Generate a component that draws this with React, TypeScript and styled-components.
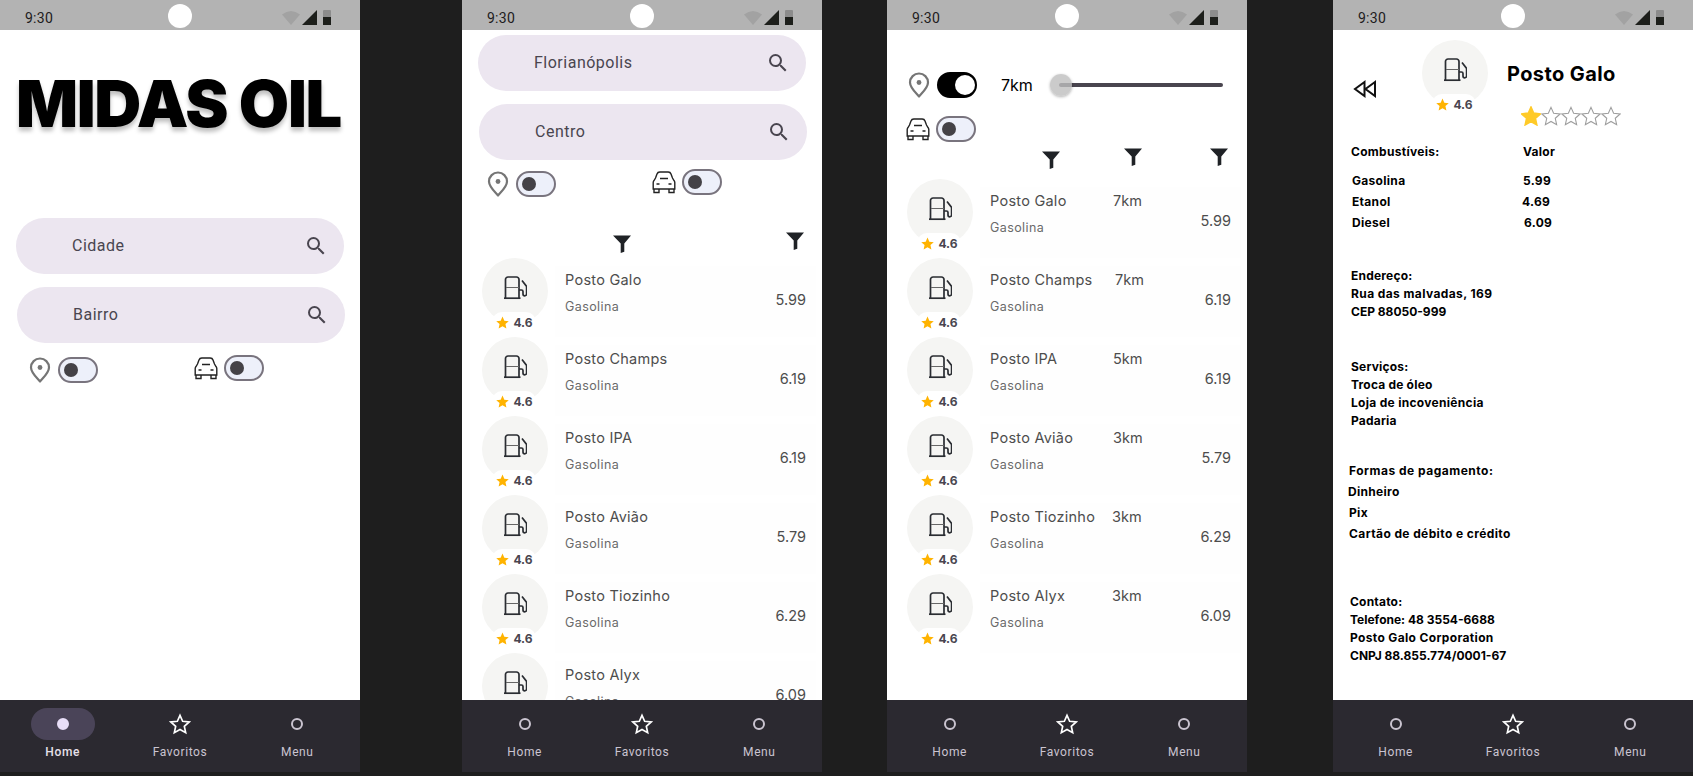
import React from "react";
import styled, { createGlobalStyle } from "styled-components";
import { MdSearch } from "react-icons/md";

const stations = [
  { name: "Posto Galo", price: "5.99", km: "7km", kmX: 0 },
  { name: "Posto Champs", price: "6.19", km: "7km", kmX: 2 },
  { name: "Posto IPA", price: "6.19", km: "5km", kmX: 0 },
  { name: "Posto Avião", price: "5.79", km: "3km", kmX: 0 },
  { name: "Posto Tiozinho", price: "6.29", km: "3km", kmX: -1 },
  { name: "Posto Alyx", price: "6.09", km: "3km", kmX: -1 },
];

const StarIcon = ({
  size,
  fill,
  stroke,
  weight = 2,
  tight,
}: {
  size: number;
  fill: string;
  stroke?: string;
  weight?: number;
  tight?: boolean;
}) => (
  <svg width={size} height={size} viewBox={tight ? "1 1.500 22 21" : "0 0 24 24"}>
    <polygon
      points="12,2.500 14.900,9 22,9.800 16.700,14.500 18.200,21.500 12,18 5.800,21.500 7.300,14.500 2,9.800 9.100,9"
      fill={fill}
      stroke={stroke || "none"}
      strokeWidth={stroke ? weight : 0}
    />
  </svg>
);

const PumpIcon = () => (
  <svg width="24" height="24" viewBox="0 0 24 24" fill="none" stroke="#2a2d32" strokeWidth="1.700">
    <path d="M2.500 22V3.500a2.500 2.500 0 0 1 2.500-2.500h8.500a2.500 2.500 0 0 1 2.500 2.500V22" />
    <path d="M1 22.200h16.500" />
    <path d="M3 11.500h13" strokeWidth="1" stroke="#666" />
    <path d="M16 14h2.500a1.500 1.500 0 0 1 1.500 1.500V18a1.800 1.800 0 0 0 3.600 0V10.500L19 4.500" />
  </svg>
);

const FilterIcon = () => (
  <svg width="18" height="18" viewBox="0 0 18 18">
    <path d="M0 .5h18L11.300 8.500v8.300l-3.600 1.200V8.500z" fill="#1f2226" />
  </svg>
);

const PinIcon = () => (
  <svg width="22" height="26" viewBox="0 0 22 26" fill="none">
    <path
      d="M11 24.500C6.500 19.500 2 15.500 2 10.500a9 9 0 0 1 18 0c0 5-4.500 9-9 14z"
      stroke="#757575"
      strokeWidth="2.200"
      strokeLinejoin="round"
    />
    <circle cx="11" cy="10.500" r="2.400" fill="#757575" />
  </svg>
);

const CarIcon = () => (
  <svg width="24" height="23" viewBox="0 0 24 23" fill="none" stroke="#222" strokeWidth="1.400">
    <path d="M3.500 7 5 3a3 3 0 0 1 3-2h8a3 3 0 0 1 3 2l1.500 4 1.500 2.500a3 3 0 0 1 .800 2V18H1.200v-6.500a3 3 0 0 1 .800-2z" />
    <path d="M2 18v3.500h5V18M17 18v3.500h5V18" />
    <path d="M8 7.500h8M4.500 13h3M16.500 13h3" />
  </svg>
);

const BackIcon = () => (
  <svg width="24" height="18" viewBox="0 0 24 18" fill="none" stroke="#111" strokeWidth="2">
    <path d="M11.500 2 2 9l9.500 7zM22 2l-9.500 7 9.500 7z" />
  </svg>
);

function StatusBar() {
  return (
    <Status>
      <Time>9:30</Time>
      <Camera />
      <StatusIcons>
        <svg width="18" height="15" viewBox="0 0 18 15">
          <path d="M0 4.500Q9-2.500 18 4.500L9 15z" fill="#a2a2a2" />
        </svg>
        <svg width="15" height="15" viewBox="0 0 15 15">
          <path d="M0 15 15 0v15z" fill="#1d1f1b" />
        </svg>
        <Battery />
      </StatusIcons>
    </Status>
  );
}

function NavBar({ active }: { active?: boolean }) {
  return (
    <Nav>
      <NavItem>
        <NavIcon $active={active}>
          <NavDot $active={active} />
        </NavIcon>
        <NavLabel $active={active}>Home</NavLabel>
      </NavItem>
      <NavItem>
        <NavIcon>
          <StarIcon size={22} fill="none" stroke="#ffffff" weight={1.800} />
        </NavIcon>
        <NavLabel>Favoritos</NavLabel>
      </NavItem>
      <NavItem>
        <NavIcon>
          <NavDot />
        </NavIcon>
        <NavLabel>Menu</NavLabel>
      </NavItem>
    </Nav>
  );
}

function Search({ label, top, left }: { label: string; top: number; left: number }) {
  return (
    <SearchBar $top={top} $left={left}>
      <SearchText>{label}</SearchText>
      <MdSearch size={24} color="#49454f" />
    </SearchBar>
  );
}

function Avatar() {
  return (
    <AvatarCircle>
      <PumpIcon />
      <RatingBadge>
        <StarIcon size={15} fill="#ffb300" />
        4.6
      </RatingBadge>
    </AvatarCircle>
  );
}

function StationList({ showKm }: { showKm?: boolean }) {
  return (
    <>
      {stations.map((s) => (
        <StationRow key={s.name}>
          <Avatar />
          <StationBody>
            <StationInfo>
              <NameLine>
                <StationName>{s.name}</StationName>
                {showKm && <Distance $shift={s.kmX}>{s.km}</Distance>}
              </NameLine>
              <FuelName>Gasolina</FuelName>
            </StationInfo>
            <Price>{s.price}</Price>
          </StationBody>
        </StationRow>
      ))}
    </>
  );
}

function ToggleRow({ top, left }: { top: number; left: number }) {
  return (
    <Toggles $top={top} $left={left}>
      <ToggleGroup $width={165} $top={2} $gap={7}>
        <PinIcon />
        <Switch />
      </ToggleGroup>
      <ToggleGroup $gap={6}>
        <CarIcon />
        <Switch />
      </ToggleGroup>
    </Toggles>
  );
}

function HomeScreen() {
  return (
    <Phone>
      <StatusBar />
      <Content>
        <Title>MIDAS OIL</Title>
        <Search label="Cidade" top={65} left={16} />
        <Search label="Bairro" top={13} left={17} />
        <ToggleRow top={12} left={29} />
      </Content>
      <NavBar active />
    </Phone>
  );
}

function ListScreen() {
  return (
    <Phone $left={102}>
      <StatusBar />
      <Content>
        <Search label="Florianópolis" top={5} left={16} />
        <Search label="Centro" top={13} left={17} />
        <ToggleRow top={9} left={25} />
        <FilterRow $top={35} $height={26}>
          <FilterSlot $left={151} $top={3}>
            <FilterIcon />
          </FilterSlot>
          <FilterSlot $left={155}>
            <FilterIcon />
          </FilterSlot>
        </FilterRow>
        <StationList />
      </Content>
      <NavBar />
    </Phone>
  );
}

function DistanceScreen() {
  return (
    <Phone $left={65}>
      <StatusBar />
      <Content>
        <SliderRow>
          <PinIcon />
          <Switch $on />
          <SliderValue>7km</SliderValue>
          <SliderTrack>
            <SliderThumb />
          </SliderTrack>
        </SliderRow>
        <CarRow>
          <CarIcon />
          <Switch />
        </CarRow>
        <FilterRow $top={6} $height={31}>
          <FilterSlot $left={155} $top={3}>
            <FilterIcon />
          </FilterSlot>
          <FilterSlot $left={64}>
            <FilterIcon />
          </FilterSlot>
          <FilterSlot $left={68}>
            <FilterIcon />
          </FilterSlot>
        </FilterRow>
        <StationList showKm />
      </Content>
      <NavBar />
    </Phone>
  );
}

function DetailScreen() {
  return (
    <Phone $left={86}>
      <StatusBar />
      <Content>
        <DetailHeader>
          <BackSlot>
            <BackIcon />
          </BackSlot>
          <Avatar />
          <HeaderText>
            <DetailTitle>Posto Galo</DetailTitle>
            <Stars>
              <StarIcon tight size={20} fill="#ffca28" stroke="#ffca28" />
              <StarIcon tight size={20} fill="none" stroke="#9e9e9e" weight={1.200} />
              <StarIcon tight size={20} fill="none" stroke="#9e9e9e" weight={1.200} />
              <StarIcon tight size={20} fill="none" stroke="#9e9e9e" weight={1.200} />
              <StarIcon tight size={20} fill="none" stroke="#9e9e9e" weight={1.200} />
            </Stars>
          </HeaderText>
        </DetailHeader>

        <FuelHead>
          <span>Combustíveis:</span>
          <span>Valor</span>
        </FuelHead>
        <FuelRow $value={171}>
          <span>Gasolina</span>
          <span>5.99</span>
        </FuelRow>
        <FuelRow $value={170}>
          <span>Etanol</span>
          <span>4.69</span>
        </FuelRow>
        <FuelRow $value={172}>
          <span>Diesel</span>
          <span>6.09</span>
        </FuelRow>

        <InfoBlock $top={34} $left={18}>
          <InfoLine $sp={0.2}>Endereço:</InfoLine>
          <InfoLine $sp={0.4}>Rua das malvadas, 169</InfoLine>
          <InfoLine>CEP 88050-999</InfoLine>
        </InfoBlock>
        <InfoBlock $top={37} $left={18}>
          <InfoLine $sp={0.2}>Serviços:</InfoLine>
          <InfoLine $sp={0.2}>Troca de óleo</InfoLine>
          <InfoLine $sp={0.3}>Loja de incoveniência</InfoLine>
          <InfoLine $sp={0.2}>Padaria</InfoLine>
        </InfoBlock>
        <InfoBlock $top={30} $left={16} $line={21}>
          <InfoLine $sp={0.5}>Formas de pagamento:</InfoLine>
          <InfoLine $sp={0.3} $shift={-1}>
            Dinheiro
          </InfoLine>
          <InfoLine $sp={0.3}>Pix</InfoLine>
          <InfoLine $sp={0.4}>Cartão de débito e crédito</InfoLine>
        </InfoBlock>
        <InfoBlock $top={49} $left={17}>
          <InfoLine $sp={0.2}>Contato:</InfoLine>
          <InfoLine>Telefone: 48 3554-6688</InfoLine>
          <InfoLine $sp={0.35}>Posto Galo Corporation</InfoLine>
          <InfoLine>CNPJ 88.855.774/0001-67</InfoLine>
        </InfoBlock>
      </Content>
      <NavBar />
    </Phone>
  );
}

export default function App() {
  return (
    <>
      <GlobalStyle />
      <Stage>
        <HomeScreen />
        <ListScreen />
        <DistanceScreen />
        <DetailScreen />
      </Stage>
    </>
  );
}

const GlobalStyle = createGlobalStyle`
  html, body {
    margin: 0;
    background-color: #1e1e1e;
    overflow: hidden;
  }
`;

const Stage = styled.div`
  display: flex;
  width: 1693px;
  height: 776px;
  font-family: Inter, "Liberation Sans", sans-serif;
`;

const Phone = styled.div<{ $left?: number }>`
  width: 360px;
  height: 772px;
  flex-shrink: 0;
  margin-left: ${({ $left }) => $left || 0}px;
  display: flex;
  flex-direction: column;
  background-color: #fff;
`;

const Content = styled.div`
  flex: 1;
  min-height: 0;
  overflow: hidden;
`;

// status bar
const Status = styled.div`
  position: relative;
  height: 30px;
  flex-shrink: 0;
  background-color: #b3b3b3;
  display: flex;
  align-items: center;
  justify-content: space-between;
  padding: 0 29px 0 25px;
`;

const Time = styled.span`
  font-family: Roboto, sans-serif;
  font-size: 14px;
  font-weight: 400;
  letter-spacing: 0.25px;
  color: #1d1b20;
  padding-top: 6px;
`;

const Camera = styled.div`
  position: absolute;
  left: 168px;
  top: 4px;
  width: 24px;
  height: 24px;
  border-radius: 50%;
  background-color: #fff;
`;

const StatusIcons = styled.div`
  display: flex;
  align-items: flex-end;
  gap: 2px;
  padding-top: 5px;
`;

const Battery = styled.div`
  width: 8px;
  height: 15px;
  margin-left: 4px;
  border-radius: 1px 1px 0 0;
  background: linear-gradient(#8c8c8c 0 50%, #1d1f1b 50% 100%);
`;

// bottom nav
const Nav = styled.div`
  height: 72px;
  flex-shrink: 0;
  background-color: #2b2930;
  display: grid;
  grid-template-columns: repeat(3, 1fr);
  padding: 0 4px;
`;

const NavItem = styled.div`
  display: flex;
  flex-direction: column;
  align-items: center;
  padding-top: 8px;
`;

const NavIcon = styled.div<{ $active?: boolean }>`
  width: 64px;
  height: 32px;
  border-radius: 16px;
  display: flex;
  align-items: center;
  justify-content: center;
  background-color: ${({ $active }) => ($active ? "#4a4458" : "transparent")};
`;

const NavDot = styled.div<{ $active?: boolean }>`
  width: 12px;
  height: 12px;
  border-radius: 50%;
  box-sizing: border-box;
  border: 2px solid ${({ $active }) => ($active ? "#e8def8" : "#cac4d0")};
  background-color: ${({ $active }) => ($active ? "#e8def8" : "transparent")};
`;

const NavLabel = styled.span<{ $active?: boolean }>`
  margin-top: 4px;
  font-family: Roboto, sans-serif;
  font-size: 12px;
  line-height: 16px;
  font-weight: ${({ $active }) => ($active ? 500 : 400)};
  letter-spacing: 0.6px;
  color: ${({ $active }) => ($active ? "#e6e0e9" : "#cac4d0")};
`;

// home
const Title = styled.h1`
  margin: 28px 0 0 0;
  padding-left: 16px;
  height: 95px;
  line-height: 91px;
  font-size: 65px;
  font-weight: 900;
  letter-spacing: -1.350px;
  white-space: nowrap;
  color: #000;
  text-shadow: 0 4px 4px rgba(0, 0, 0, 0.25);
`;

const SearchBar = styled.div<{ $top: number; $left: number }>`
  width: 328px;
  height: 56px;
  box-sizing: border-box;
  margin: ${({ $top, $left }) => `${$top}px 0 0 ${$left}px`};
  padding: 0 16px 0 56px;
  border-radius: 28px;
  background-color: #ece6f0;
  display: flex;
  align-items: center;
  justify-content: space-between;
`;

const SearchText = styled.span`
  font-family: Roboto, sans-serif;
  font-size: 16px;
  letter-spacing: 0.5px;
  color: #49454f;
  padding-bottom: 1px;
`;

const Toggles = styled.div<{ $top: number; $left: number }>`
  display: flex;
  align-items: flex-start;
  margin: ${({ $top, $left }) => `${$top}px 0 0 ${$left}px`};
`;

const ToggleGroup = styled.div<{ $width?: number; $top?: number; $gap: number }>`
  display: flex;
  align-items: center;
  gap: ${({ $gap }) => $gap}px;
  width: ${({ $width }) => ($width ? `${$width}px` : "auto")};
  margin-top: ${({ $top }) => $top || 0}px;
`;

const Switch = styled.div<{ $on?: boolean }>`
  position: relative;
  width: 40px;
  height: 26px;
  box-sizing: border-box;
  flex-shrink: 0;
  border-radius: 13px;
  border: 2px solid ${({ $on }) => ($on ? "#000" : "#79747e")};
  background-color: ${({ $on }) => ($on ? "#000" : "#edf0fa")};

  &::after {
    content: "";
    position: absolute;
    border-radius: 50%;
    top: ${({ $on }) => ($on ? "1px" : "4px")};
    left: ${({ $on }) => ($on ? "16px" : "4px")};
    width: ${({ $on }) => ($on ? "20px" : "14px")};
    height: ${({ $on }) => ($on ? "20px" : "14px")};
    background-color: ${({ $on }) => ($on ? "#fff" : "#444247")};
  }
`;

// filters and list
const FilterRow = styled.div<{ $top: number; $height: number }>`
  display: flex;
  align-items: flex-start;
  margin-top: ${({ $top }) => $top}px;
  height: ${({ $height }) => $height}px;
`;

const FilterSlot = styled.div<{ $left: number; $top?: number }>`
  display: flex;
  margin-left: ${({ $left }) => $left}px;
  margin-top: ${({ $top }) => $top || 0}px;
`;

const StationRow = styled.div`
  height: 79px;
  display: flex;
  align-items: flex-start;
  padding-left: 20px;
`;

const AvatarCircle = styled.div`
  position: relative;
  width: 66px;
  height: 66px;
  flex-shrink: 0;
  box-sizing: border-box;
  padding-top: 18px;
  border-radius: 50%;
  background-color: #f5f5f3;
  display: flex;
  justify-content: center;
  align-items: flex-start;
`;

const RatingBadge = styled.div`
  position: absolute;
  left: 10px;
  top: 54px;
  width: 44px;
  height: 18px;
  box-sizing: border-box;
  padding-top: 2px;
  border-radius: 10px 10px 0 0;
  background-color: #fff;
  display: flex;
  align-items: center;
  justify-content: center;
  gap: 3px;
  font-size: 12px;
  font-weight: 700;
  color: #49454f;
`;

const StationBody = styled.div`
  flex: 1;
  height: 71px;
  margin: 8px 6px 0 7px;
  box-sizing: border-box;
  padding: 0 10px;
  background-color: #fefefe;
  display: flex;
  justify-content: space-between;
  align-items: flex-start;
`;

const StationInfo = styled.div`
  display: flex;
  flex-direction: column;
`;

const NameLine = styled.div`
  display: flex;
  margin-top: 4px;
  height: 20px;
  line-height: 20px;
`;

const StationName = styled.span`
  width: 123px;
  font-size: 14.500px;
  letter-spacing: 0.250px;
  color: #4d4d4d;
  white-space: nowrap;
`;

const Distance = styled.span<{ $shift: number }>`
  margin-left: ${({ $shift }) => $shift}px;
  font-size: 14.500px;
  color: #4d4d4d;
`;

const FuelName = styled.span`
  margin-top: 9px;
  line-height: 16px;
  font-size: 12.500px;
  letter-spacing: 0.400px;
  color: #6a6a6a;
`;

const Price = styled.span`
  margin-top: 24px;
  line-height: 20px;
  font-size: 14.500px;
  color: #4d4d4d;
`;

// distance filter
const SliderRow = styled.div`
  display: flex;
  align-items: center;
  margin-top: 42px;
  padding-left: 21px;
  gap: 7px;
`;

const SliderValue = styled.span`
  margin-left: 17px;
  width: 50px;
  font-size: 16px;
  color: #000;
`;

const SliderTrack = styled.div`
  position: relative;
  width: 164px;
  height: 4px;
  margin-left: 1px;
  border-radius: 2px;
  background-color: #49454f;
`;

const SliderThumb = styled.div`
  position: absolute;
  left: -9px;
  top: -9px;
  width: 22px;
  height: 22px;
  border-radius: 50%;
  background-color: rgba(190, 190, 190, 0.8);
  box-shadow: 0 1px 3px rgba(0, 0, 0, 0.3);
`;

const CarRow = styled.div`
  display: flex;
  align-items: center;
  margin-top: 18px;
  padding-left: 19px;
  gap: 6px;
`;

// detail
const DetailHeader = styled.div`
  display: flex;
  align-items: flex-start;
  height: 113px;
  padding: 10px 0 0 20px;
  box-sizing: border-box;
`;

const BackSlot = styled.div`
  display: flex;
  width: 69px;
  margin-top: 40px;
`;

const HeaderText = styled.div`
  margin: 19px 0 0 19px;
`;

const DetailTitle = styled.div`
  line-height: 30px;
  font-size: 20px;
  font-weight: 700;
  letter-spacing: 0.400px;
  color: #000;
`;

const Stars = styled.div`
  display: flex;
  margin: 17px 0 0 14px;
`;

const boldText = `
  font-size: 12px;
  font-weight: 700;
  color: #000;
`;

const FuelHead = styled.div`
  ${boldText}
  display: grid;
  grid-template-columns: 172px auto;
  line-height: 18px;
  padding-left: 18px;
  letter-spacing: 0.300px;
`;

const FuelRow = styled.div<{ $value: number }>`
  ${boldText}
  display: grid;
  grid-template-columns: ${({ $value }) => $value}px auto;
  line-height: 21px;
  padding-left: 19px;
  letter-spacing: 0.300px;

  ${FuelHead} + & {
    margin-top: 9px;
  }
`;

const InfoBlock = styled.div<{ $top: number; $left: number; $line?: number }>`
  ${boldText}
  margin: ${({ $top, $left }) => `${$top}px 0 0 ${$left}px`};
  line-height: ${({ $line }) => $line || 18}px;
  white-space: nowrap;
`;

const InfoLine = styled.div<{ $sp?: number; $shift?: number }>`
  letter-spacing: ${({ $sp }) => $sp || 0}px;
  margin-left: ${({ $shift }) => $shift || 0}px;
`;
